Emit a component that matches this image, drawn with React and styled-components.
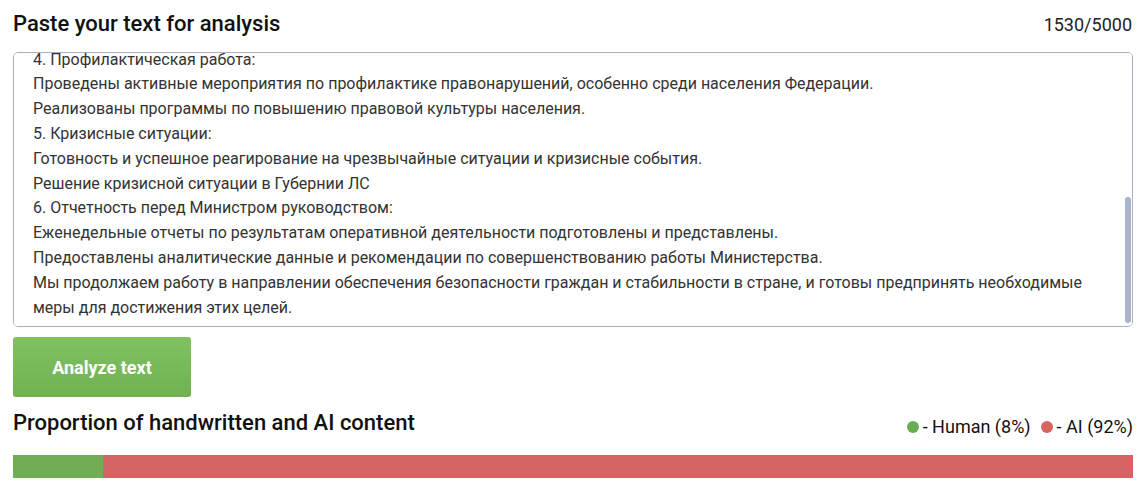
import React, { useLayoutEffect, useRef, useState } from "react";
import styled, { createGlobalStyle } from "styled-components";

const GlobalStyle = createGlobalStyle`
  body {
    margin: 0;
    background: #fff;
    font-family: Roboto, "Liberation Sans", sans-serif;
    color: #111;
  }
`;

const reportText = `Отчет о деятельности Министерства внутренних дел за отчетный период
Уважаемый Министр,
Представляю вам отчет о проделанной работе за прошедший период.
1. Оперативная работа:
Проведены оперативные мероприятия по выявлению и пресечению преступлений на территории Федерации.
Усилен контроль за соблюдением общественного порядка в местах массового пребывания граждан.
2. Кадровая работа:
Проведен набор и обучение новых сотрудников в соответствии с утвержденным планом.
Организованы курсы повышения квалификации для личного состава.
3. Взаимодействие с другими ведомствами:
Налажено эффективное взаимодействие с правоохранительными органами и органами местного самоуправления.
Проведены совместные учения и тренировки.
4. Профилактическая работа:
Проведены активные мероприятия по профилактике правонарушений, особенно среди населения Федерации.
Реализованы программы по повышению правовой культуры населения.
5. Кризисные ситуации:
Готовность и успешное реагирование на чрезвычайные ситуации и кризисные события.
Решение кризисной ситуации в Губернии ЛС
6. Отчетность перед Министром руководством:
Еженедельные отчеты по результатам оперативной деятельности подготовлены и представлены.
Предоставлены аналитические данные и рекомендации по совершенствованию работы Министерства.
Мы продолжаем работу в направлении обеспечения безопасности граждан и стабильности в стране, и готовы предпринять необходимые меры для достижения этих целей.`;

const Page = styled.main`
  padding: 0 11px 0 13px;
`;

const Header = styled.div`
  height: 48px;
  display: flex;
  align-items: center;
  justify-content: space-between;
`;

const Title = styled.h2`
  margin: 0;
  font-size: 22px;
  line-height: 26px;
  font-weight: 500;
  color: #111;
`;

const Counter = styled.span`
  font-size: 18px;
  color: #222;
  padding-right: 1px;
`;

const BoxWrap = styled.div`
  position: relative;
  margin-top: 4px;
`;

const TextBox = styled.textarea`
  display: block;
  box-sizing: border-box;
  width: 100%;
  height: 275px;
  padding: 8px 22px 6px 19px;
  border: 1px solid #a9afc4;
  border-radius: 5px;
  resize: none;
  outline: none;
  font-family: Roboto, "Liberation Sans", sans-serif;
  font-size: 16px;
  line-height: 24.8px;
  color: #333;
  background: #fff;
  scrollbar-width: none;

  &::-webkit-scrollbar {
    display: none;
  }
`;

const ScrollThumb = styled.div`
  position: absolute;
  right: 2px;
  width: 6px;
  border-radius: 3px;
  background: #aab3c9;
  pointer-events: none;
`;

const AnalyzeButton = styled.button`
  display: block;
  width: 178px;
  height: 60px;
  margin-top: 10px;
  border: none;
  border-radius: 3px;
  background: linear-gradient(to bottom, #80c262, #70b152);
  color: #fff;
  font-family: Roboto, "Liberation Sans", sans-serif;
  font-size: 18px;
  font-weight: 700;
  cursor: pointer;
`;

const StatsRow = styled.div`
  margin-top: 13px;
  display: flex;
  justify-content: space-between;
  align-items: flex-start;
`;

const Legend = styled.div`
  margin-top: 6px;
  display: flex;
  align-items: center;
  gap: 10px;
  font-size: 18px;
  line-height: 22px;
  color: #111;
`;

const LegendItem = styled.span`
  display: inline-flex;
  align-items: center;
  gap: 4px;
`;

const Dot = styled.span`
  width: 12px;
  height: 12px;
  border-radius: 50%;
  background: ${(p) => p.$color};
`;

const Bar = styled.div`
  margin-top: 17px;
  height: 23px;
  display: flex;
`;

const Segment = styled.div`
  height: 100%;
  background: ${(p) => p.$color};
`;

const human = 8;
const ai = 92;

export default function App() {
  const boxRef = useRef(null);
  const [thumb, setThumb] = useState(null);

  useLayoutEffect(() => {
    const box = boxRef.current;
    if (!box) return;
    box.scrollTop = box.scrollHeight;
    const track = box.clientHeight - 4;
    const height = (box.clientHeight / box.scrollHeight) * track;
    const top = 2 + (box.scrollTop / box.scrollHeight) * track;
    setThumb({ top, height });
  }, []);

  return (
    <Page>
      <GlobalStyle />
      <Header>
        <Title>Paste your text for analysis</Title>
        <Counter>1530/5000</Counter>
      </Header>
      <BoxWrap>
        <TextBox ref={boxRef} defaultValue={reportText} spellCheck={false} />
        {thumb && <ScrollThumb style={{ top: thumb.top, height: thumb.height }} />}
      </BoxWrap>
      <AnalyzeButton>Analyze text</AnalyzeButton>
      <StatsRow>
        <Title>Proportion of handwritten and AI content</Title>
        <Legend>
          <LegendItem>
            <Dot $color="#6aad50" /> - Human ({human}%)
          </LegendItem>
          <LegendItem>
            <Dot $color="#d96464" /> - AI ({ai}%)
          </LegendItem>
        </Legend>
      </StatsRow>
      <Bar>
        <Segment $color="#6fae52" style={{ width: `${human}%` }} />
        <Segment $color="#d66464" style={{ width: `${ai}%` }} />
      </Bar>
    </Page>
  );
}
